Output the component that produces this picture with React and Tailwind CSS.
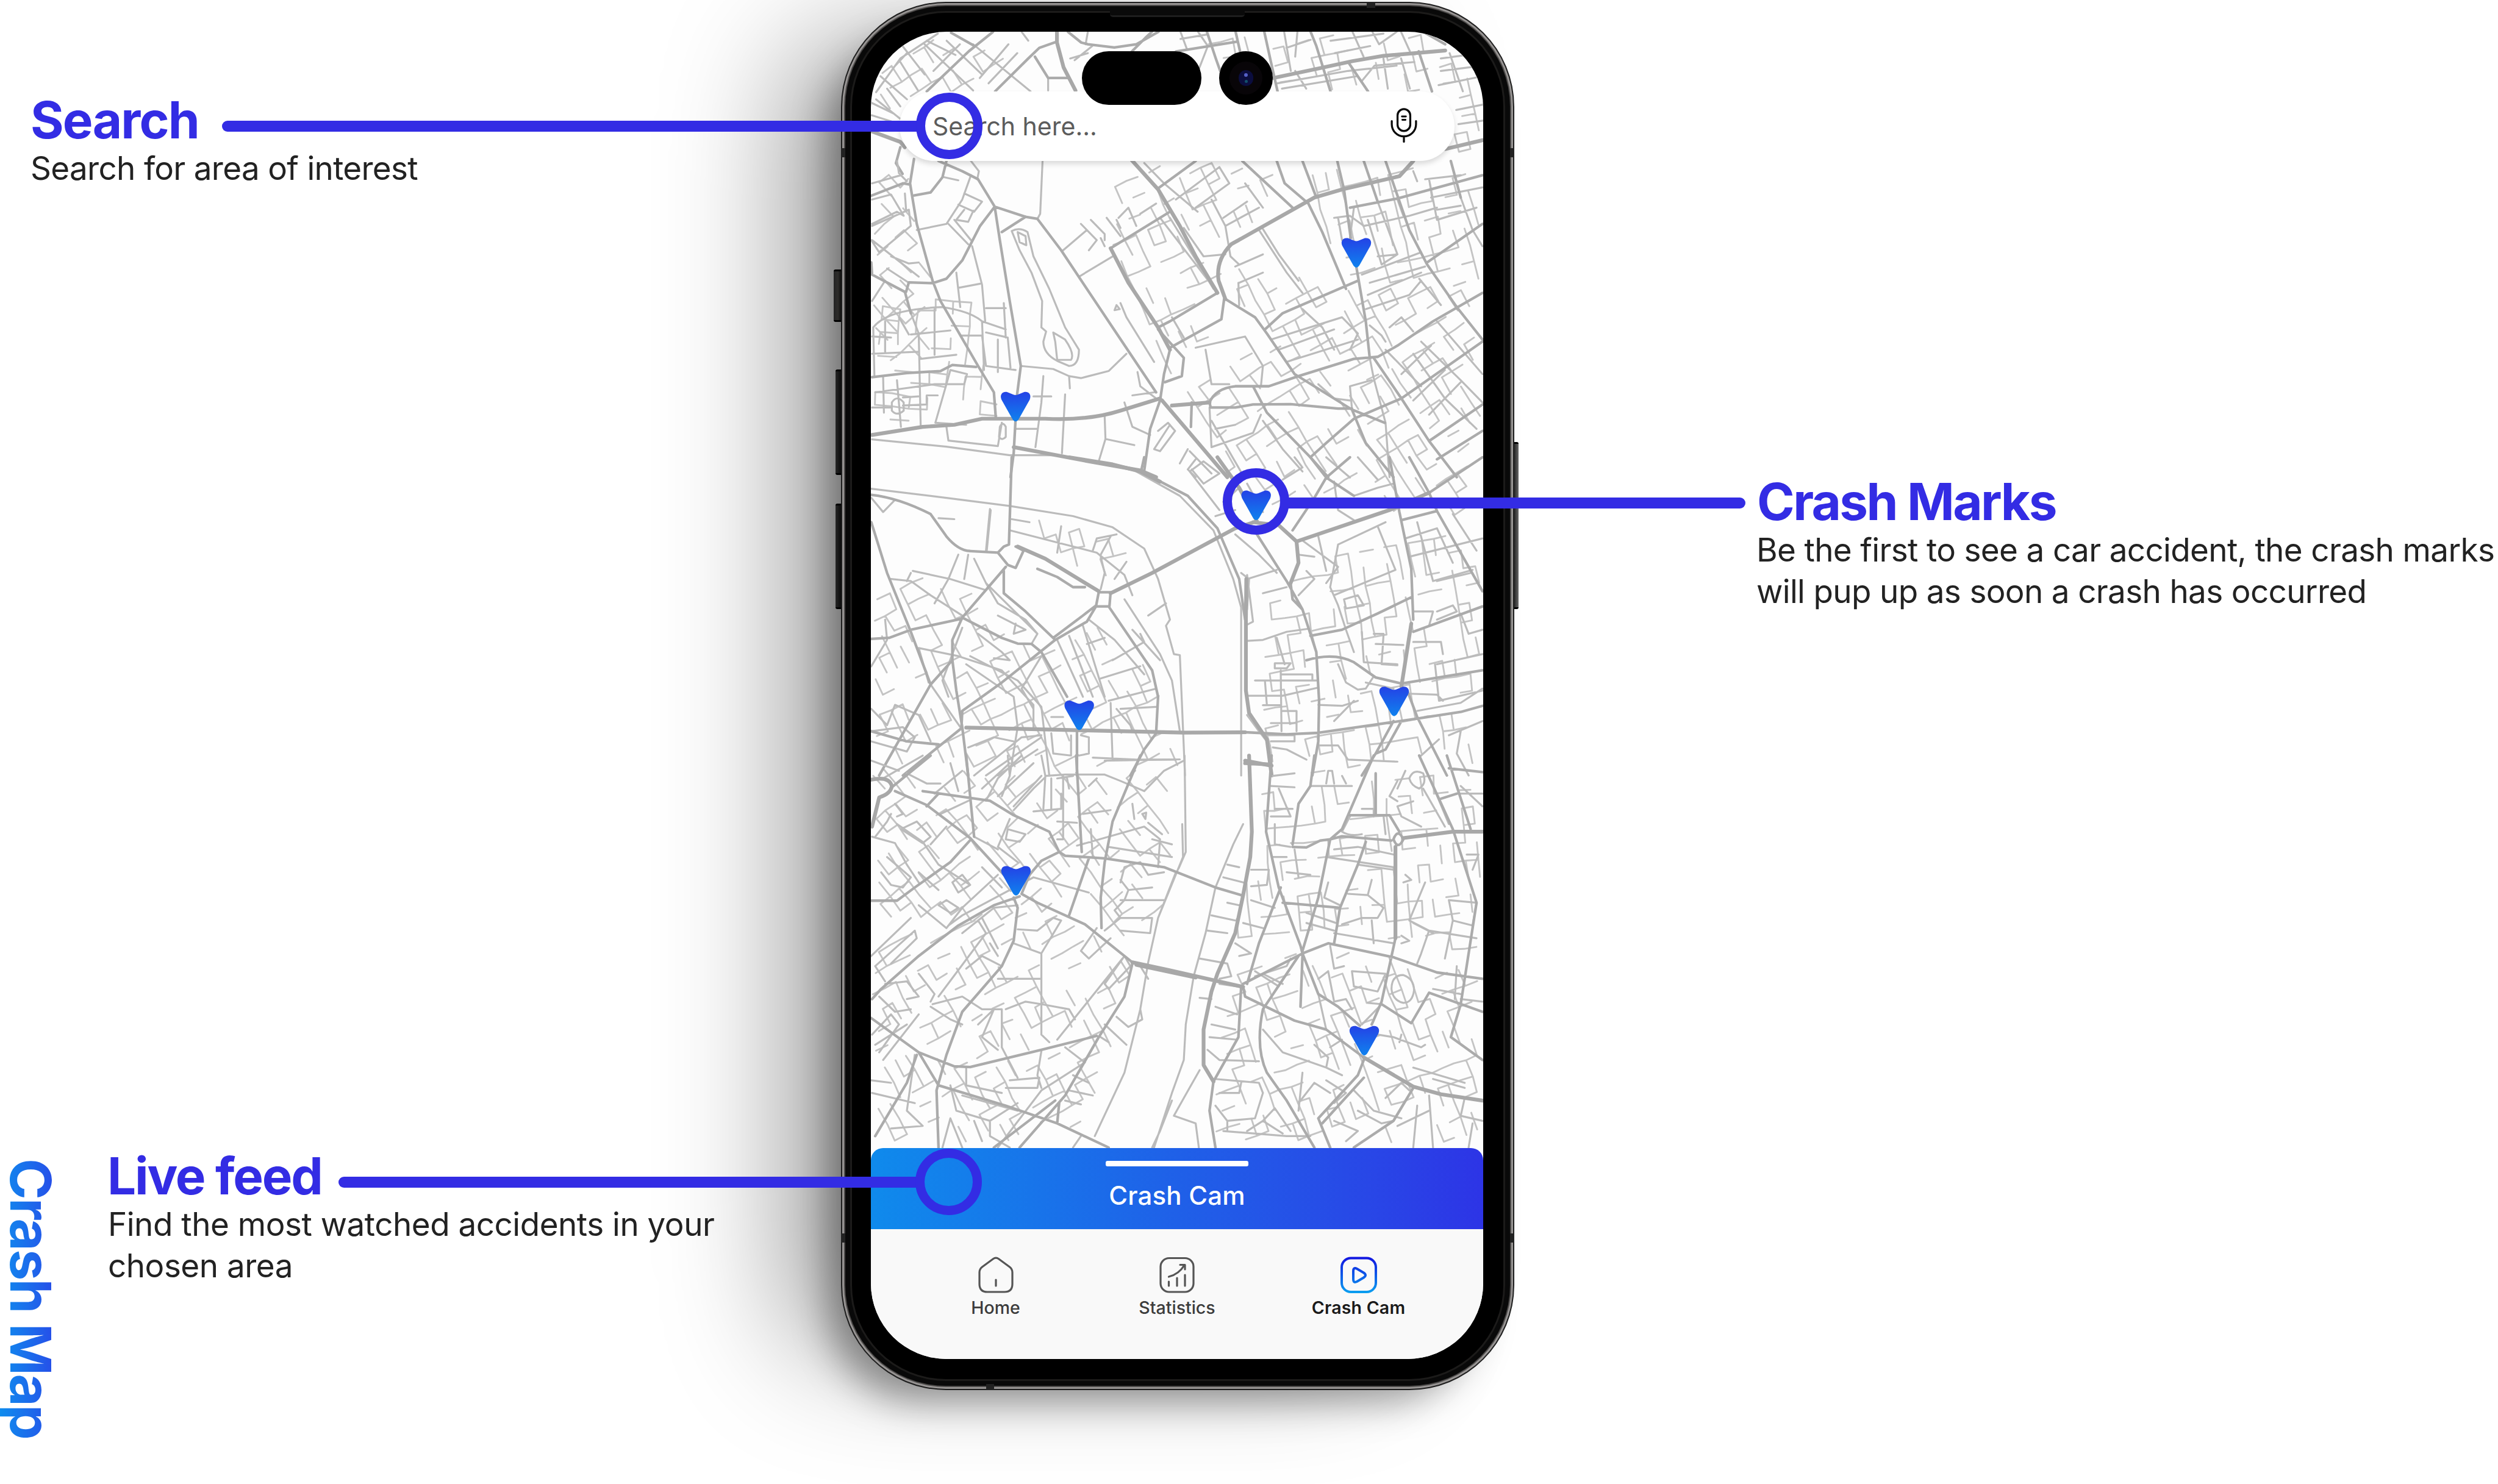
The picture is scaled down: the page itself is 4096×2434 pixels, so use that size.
import React from "react";

const FRAMES = {
  north: "matrix(1.1096 0 0 0.4464 2080 0)",
  upper: "matrix(0.995 0 0 0.5102 2180 400)",
  middle: "matrix(0.995 0 0 0.5102 2180 1150)",
  lower: "matrix(0.995 0 0 0.6378 2180 1900)",
};

/* Traced streets: w = heavy, m = main, s = side street */
const STREETS = {
  north: {
    w: ["M520 180L520 240L535 380L562 510", "M1010 440L1115 385L1190 345L1260 315L1400 285", "M1400 840L1485 790", "M100 740L165 800L175 830"],
    m: [
      "M545 180L575 240L590 250L650 268L700 250L750 180", "M990 180L1005 350L1020 515", "M1095 180L1108 260L1140 515", "M1340 290L1370 515",
      "M280 185L330 255", "M375 180L320 290L225 515", "M520 235L480 270L455 330L380 515", "M470 320L500 440L545 440", "M690 290L720 215L735 180",
      "M165 830L155 920L170 980", "M1180 350L1225 515", "M860 180L880 330L890 400", "M925 180L935 290", "M790 290L930 235", "M1350 180L1400 250",
    ],
    s: [
      "M250 190L165 330L110 520", "M170 260L220 420", "M165 350L205 510", "M220 250L330 510", "M270 230L350 420", "M330 250L460 515", "M440 180L455 230",
      "M225 230L290 310", "M180 300L150 380", "M120 430L180 560", "M110 560L165 670", "M135 500L165 600", "M300 250L240 400", "M410 250L345 440", "M430 300L365 470",
      "M800 180L815 280", "M840 180L862 260L840 400", "M800 220L860 195", "M1040 270L1095 225", "M1035 180L1050 400", "M1065 180L1060 320", "M1190 180L1215 320", "M1235 180L1250 250L1290 180",
      "M1300 180L1320 290", "M1140 230L1260 190", "M1150 300L1230 260", "M1020 470L1180 400L1290 370", "M1030 500L1200 430", "M1060 400L1085 500", "M1210 460L1240 370L1330 350",
      "M1390 330L1480 300", "M1390 400L1485 370", "M1385 480L1485 430", "M1410 300L1440 515", "M1425 620L1485 590", "M1430 700L1485 680", "M600 260L560 340", "M550 330L590 300",
      "M1260 330L1270 500", "M1300 330L1320 500", "M590 180L585 250", "M500 440L500 510", "M100 650L165 700", "M100 580L150 640",
    ],
  },
  upper: {
    w: [
      "M1380 10L1345 85L1200 150L1130 190L1080 245L920 420Q880 500 888 600L905 690", "M740 1180L640 1240Q560 1290 450 1280L290 1280L220 1310L140 1320L12 1360",
      "M668 5L735 150L790 330L830 480L885 660", "M370 1420L560 1490L690 1535L730 1568", "M745 1190L910 1568", "M615 440L660 610L735 830L765 940", "M770 1215L865 1200",
    ],
    m: [
      "M5 185L90 120L105 125", "M118 0L108 120L125 320L165 600L185 700L280 1020L320 1150L325 1280", "M200 10L190 90L160 165L118 180",
      "M180 10L240 60L280 100L322 235L335 400L360 700L388 1020L378 1170L370 1450L362 1568", "M322 235L285 330L240 500L200 590L165 612L105 608L98 655",
      "M322 235L400 285L430 295L490 450L620 830L730 1150", "M400 285L340 360", "M830 10L735 145", "M765 260L615 440", "M765 940L750 1060L740 1190",
      "M905 690L980 780L1010 860L1080 1060L1225 1235L1308 1300", "M740 1190L715 1330L700 1535", "M865 1200Q880 1130 930 1120L1015 1120L1090 1070L1230 985L1290 975L1340 920L1430 800L1555 660",
      "M865 1200L868 1225L930 1225L975 1210L1070 1208L1190 1230L1225 1230", "M948 10L1075 240", "M1035 10L1055 120L1115 220L1150 360L1210 640", "M1100 10L1135 190",
      "M1188 10L1205 150L1222 390", "M1236 530L1260 800L1270 980", "M1255 10L1290 210", "M1310 10L1370 350L1415 520L1490 730L1555 890", "M1475 10L1500 190",
      "M1220 240L1340 195L1555 80", "M1555 320L1415 510", "M1240 600L1050 760L1005 840", "M885 660L765 800L735 830", "M765 930L895 790L902 690",
      "M975 1120L1010 1250L1120 1470L1165 1568", "M1555 900L1350 1180L1230 1280L1160 1400L1120 1470", "M1280 980L1350 1180L1420 1390L1490 1568", "M12 1075L100 1055L185 1045L215 1015L275 1025",
      "M10 510L12 570L95 655L110 760", "M735 840L800 980L795 1070L752 1100", "M820 1200L818 1320", "M1225 1235L1260 1400L1330 1568", "M1420 1390L1555 1210", "M1440 1480L1555 1340",
    ],
    s: [
      "M443 10L437 270L430 295", "M365 355Q385 335 405 360L420 480L460 640L500 830L535 940Q535 1020 510 1020L480 995Q445 960 445 900L452 850L440 830L442 700L415 560L385 450Z",
      "M470 855L500 890Q525 960 515 990L480 990L475 900Z", "M380 360L400 380L402 425L385 410Z", "M388 1020L470 1035L510 1070L540 1080L610 1045L655 960",
      "M15 830Q50 740 190 730Q260 750 290 800L350 840", "M12 1382L200 1418L360 1460L480 1460", "M110 760L130 860L135 1320", "M15 830L18 1075", "M200 1320L205 1388L330 1415L340 1300",
      "M170 740L170 965", "M12 960L130 950", "M110 865L210 845", "M12 875L60 880", "M45 800L45 950", "M80 780L105 865", "M135 985L225 965", "M235 870L290 870L300 1020L375 1040",
      "M290 800L295 1040", "M330 890L330 1050", "M300 855L355 880L362 1030", "M225 560L235 730", "M265 430L290 620L298 800", "M230 635L285 615", "M300 735L350 735", "M345 710L350 880",
      "M12 330L105 250L110 330L30 460L10 400", "M12 200L60 175L92 280L75 260L12 320", "M95 170L98 250", "M12 120L85 80", "M75 10L80 70L100 110", "M125 350L200 320L240 200L262 80",
      "M262 10L282 60L278 100", "M245 170L290 210L270 260L230 225", "M205 320L255 420", "M220 300L262 400", "M60 480L105 515L130 510", "M12 400L130 580", "M50 540L105 610", "M45 600L12 700",
      "M245 250L225 300L255 310L268 255", "M195 90L230 105", "M20 1150L170 1110L245 1110L252 1060L210 1040L200 1110L172 1300L250 1310", "M40 1075L42 1250", "M75 1090L85 1320",
      "M12 1225L60 1225", "M90 1175L130 1170", "M90 1215L150 1210L150 1165L178 1165", "M62 1200Q75 1160 92 1200L92 1240Q75 1270 62 1240Z", "M445 1070L440 1200L425 1420", "M500 1160L492 1450",
      "M420 1170L465 1170", "M510 1070L512 1130", "M375 1330L430 1330", "M335 1320Q342 1290 350 1320L350 1370Q340 1390 333 1370Z", "M600 1270L602 1380L585 1490", "M602 1380L675 1410", "M650 1200L670 1320L715 1360",
      "M670 1165L725 1150", "M683 1050L690 1120L730 1180", "M765 1310L725 1430L740 1440L778 1340L760 1300L735 1340", "M540 320L580 400L560 450", "M555 350L495 450", "M565 300L600 370L600 400", "M605 290L640 380",
      "M635 290L660 240L680 330", "M535 580L620 480", "M590 390L600 430", "M630 300L640 340", "M640 710L655 780L725 1000", "M630 720L625 745L638 740Z", "M690 270L730 220", "M700 20L750 120L835 260",
      "M740 290L870 620", "M765 290L875 640", "M800 340L850 480L905 470", "M770 780L800 880", "M780 200L890 40L915 120L830 240", "M870 200L905 330L918 480L940 520", "M905 330L990 240", "M900 290L960 210", "M955 120L1000 240",
      "M855 940L870 1110L915 1110", "M830 930L955 875L1000 1020L995 1120", "M930 530L1000 470", "M990 350L1060 560L1100 660", "M940 610L1000 560", "M938 610L940 720", "M1000 345L1040 470L1090 600",
      "M1220 390L1230 240", "M1180 290L1220 280L1255 330L1370 280L1440 240", "M1190 290L1200 400", "M1265 300L1300 520", "M1290 210L1340 470L1290 480", "M1340 200L1355 280", "M1420 100L1440 300L1540 240", "M1500 190L1530 350L1555 430",
      "M1425 190L1555 140", "M1440 250L1500 230", "M1410 100L1500 80", "M1380 60L1390 110", "M1395 590L1450 720", "M1270 610L1410 530", "M1265 670L1400 560", "M1300 520L1340 470", "M1250 570L1400 460",
      "M1260 740L1370 670L1400 600", "M1440 800L1555 1060", "M1400 900L1500 1090L1555 1200", "M1380 960L1460 1180L1540 1330", "M1310 940L1400 1120", "M1425 920L1350 1060", "M1460 1040L1380 1190", "M1500 1100L1420 1260",
      "M1225 1230L1220 1120L1275 1090", "M1140 1110L1180 1180L1220 1190", "M1270 980L1280 1080L1310 1300L1320 1568", "M1020 890L1200 780L1240 860L1220 940", "M1040 940L1180 840", "M1060 1000L1240 890", "M1100 740L1150 830L1180 940",
      "M1270 820L1300 870L1310 900", "M1320 830L1350 780L1380 850", "M995 1260L975 1350L870 1420L865 1225", "M1000 1290L1050 1430L1100 1540", "M870 1290L950 1560", "M880 1330L930 1310", "M815 1440L870 1550", "M830 1480L810 1530L830 1568", "M790 1500L810 1430",
    ],
  },
  middle: {
    w: [
      "M510 0L620 35L690 70L740 120", "M380 440L450 500L585 660", "M615 670L720 570L930 350L985 315", "M885 0L940 150L985 315", "M1085 415L1320 260L1420 175",
      "M250 1332L530 1345L800 1357L955 1355", "M958 600L957 800L957 1150L965 1260L1010 1390L1022 1568", "M1375 820L1350 1130", "M975 320L1040 335L1085 415L1090 520L1070 620", "M955 1495L1022 1520",
    ],
    m: [
      "M365 0L358 430L345 440L330 470L355 530L375 545L395 460L375 440", "M692 70L810 190L885 350L940 600L955 800", "M700 0L692 70", "M10 185Q80 200 160 280L200 390Q230 460 260 462L330 470",
      "M585 665L615 665L612 735L578 735Z", "M578 735L555 810L475 900L340 1110L240 1250L238 1330", "M610 735L720 1050L735 1180L730 1360L700 1440L665 1568", "M350 540L240 790L215 900L215 1000L160 1120L30 1568",
      "M10 895L55 890L110 850L240 795", "M240 790L340 890L380 918L415 920L440 960L505 1180", "M530 1345L530 1568", "M10 320L50 570L110 860L160 1120", "M235 1340L90 1568", "M345 560L345 670L400 760L475 900",
      "M215 1000L225 1150L240 1330L255 1568", "M955 1355L1060 1365L1140 1358L1400 1285L1500 1255L1555 1225", "M985 380L1060 610L1100 750L1135 960L1142 1200L1140 1400L1125 1568", "M1070 620L1075 700L1100 750",
      "M1320 0L1345 270L1375 550L1380 800", "M1365 1150L1390 1280L1465 1568", "M1120 0L1160 100L1230 190", "M1220 0L1160 100L1130 200L1075 360", "M1350 310L1440 265L1420 175L1370 0", "M1420 175L1555 0",
      "M1440 265L1555 660", "M1120 880L1200 850L1290 770L1375 690", "M1380 860L1555 735", "M1110 1000Q1180 960 1230 1010L1285 1085L1350 1115L1555 1050", "M1330 1300L1285 1460L1250 1568", "M1350 1300L1310 1440L1285 1460",
      "M10 1350L100 1400L180 1415", "M430 550L480 590L520 640L550 640", "M575 735L545 780L470 890",
    ],
    s: [
      "M10 155L200 200L360 240L520 290L620 345L700 450L735 600L765 800L755 830L775 970L790 975L795 1200L803 1568", "M680 70L790 190L875 360L925 600L945 740L945 1568", "M360 360L480 420L580 470L650 580L670 680",
      "M490 340L480 470", "M300 460L310 255", "M312 260L302 460", "M365 305L410 320", "M570 460L580 400L630 380", "M615 390L590 480", "M655 515L625 600", "M180 300L220 305", "M590 490L600 570L590 650",
      "M230 480L205 600L170 720", "M255 480L245 600", "M270 500L300 620L330 720L400 800L430 870L415 920", "M115 560L210 600L300 655", "M60 600L110 610L160 680L240 780", "M110 570L100 610", "M300 620L430 870",
      "M240 840L190 1100L205 1180", "M130 940L230 980L340 1050L420 1220L420 1330", "M280 870L340 960L360 1000L320 990", "M250 1020L370 1180L380 1330L360 1568", "M260 980L380 1100L440 1230L460 1568", "M440 980L390 1140L420 1240",
      "M330 780L400 850L370 870L375 820", "M480 900L545 1180", "M510 880L570 1180", "M545 830L600 1180", "M560 800L625 900L700 1070", "M555 920L600 890", "M590 1090L690 1030", "M610 1200L730 1140", "M620 1000L700 910L690 870", "M670 850L740 1000",
      "M710 780L755 720", "M650 700L740 970L770 1100L790 1350", "M640 1240L730 1230", "M465 1280L495 1280", "M630 1240L665 1320L670 1350", "M615 1210L620 1490", "M465 1360L470 1460L515 1470L515 1370", "M540 1370L560 1380L560 1460L535 1470", "M570 1480L680 1490L780 1490",
      "M10 1030L50 900L45 800", "M10 1240L50 1320L70 1220L130 1270L160 1400", "M10 1350L90 1330L120 1380L100 1450L10 1400", "M160 1120L235 1330", "M130 940L155 1110", "M270 1568L390 1380L440 1370", "M300 1568L440 1380", "M255 1430L320 1380L370 1400",
      "M330 1568L430 1440", "M930 380L990 480L1035 570", "M960 600L1035 555", "M960 580L975 810L960 825", "M945 570L965 600L960 750", "M1000 670L1060 640", "M960 905L1000 900L1060 860L1115 845", "M1035 890L1055 1020", "M1030 1015L1070 1015L1060 1040L1030 1040Z",
      "M980 1100L1135 1100", "M1000 1222L1045 1222", "M1045 1050L1047 1350", "M1045 1070L1125 1070L1125 1100", "M960 1175L1050 1175L1140 1135", "M1005 1100L1010 1220", "M1050 1250L1085 1250L1085 1350", "M1140 1220L1200 1225L1240 1200", "M1180 1300L1230 1200",
      "M1190 430L1170 640L1190 730L1210 850L1230 960", "M1100 410L1190 540L1160 620", "M1290 340L1335 555L1180 680", "M1310 320L1190 430", "M1140 390L1160 560", "M1370 490L1555 400", "M1360 400L1440 350L1480 520", "M1390 320L1430 610L1530 555", "M1440 610L1525 570", "M1480 280L1540 460",
      "M1205 700L1240 680L1255 730L1210 745Z", "M1380 760L1430 760L1420 830", "M1440 760L1480 730L1490 760L1440 800", "M1500 770L1520 870L1555 850", "M1380 910L1450 910L1455 970", "M1280 870L1305 870L1300 1020L1340 1025", "M1285 920L1355 925", "M1250 860L1255 1010L1340 1020",
      "M1440 1020L1555 970", "M1435 1020L1445 1200L1555 1150", "M1370 1165L1440 1170L1455 1200", "M1390 1250L1500 1210L1555 1140", "M1190 1020L1210 1110L1240 1145L1260 1140L1280 1080", "M1260 1110L1330 1140", "M1500 1350L1490 1460L1520 1568", "M1400 1470L1445 1390",
      "M1470 1370L1555 1300", "M1140 1420L1190 1420L1215 1490L1340 1500", "M1025 1430L1060 1440L1110 1490", "M960 1270L990 1350L1010 1400", "M1020 1310L1085 1310", "M1000 1370L1080 1370L1080 1400L1020 1400", "M10 200L40 270L70 210", "M820 60L850 130L890 80L850 20L815 70L890 260",
      "M900 220L940 150", "M880 290L930 260", "M1000 270L960 130", "M1050 110L1100 50L1080 0", "M1180 120L1190 260L1230 310", "M1090 480L1130 490", "M1110 560L1130 600L1090 680", "M1160 0L1220 100", "M1240 0L1290 110", "M1230 190L1290 150L1330 130",
    ],
  },
  lower: {
    w: [
      "M670 815L760 845L950 912", "M680 825L830 875", "M965 0L972 300L968 400L950 550L930 700L885 860L870 930L850 1080L850 1220L875 1285", "M1335 360L1335 720", "M1355 325L1480 300L1555 300", "M1255 1190L1380 1305L1450 1335L1555 1360",
      "M10 95Q55 80 62 120Q60 150 30 165L12 280", "M955 30L1020 35",
    ],
    m: [
      "M62 125L160 0", "M70 140L150 195L260 325L345 470", "M140 140L310 178L370 235L460 300L485 380L500 395L600 405L750 440L880 520L945 550", "M485 380L440 415L410 470L390 545L430 580L550 665L670 815",
      "M10 572L75 572L120 520L210 420L262 330", "M250 0L270 320", "M385 555L320 590L230 670L130 790L35 920L12 960", "M370 560L380 600L370 730L340 830L240 1010L200 1180L175 1320L180 1545",
      "M10 1035L130 1170L180 1300L350 1380L480 1450L610 1545", "M130 1170L220 1225L260 1228L440 1160L580 1105", "M125 1180L100 1290L20 1500", "M670 820L650 950L585 1110L500 1340L385 1545", "M690 0L620 260L600 420L590 560L592 680",
      "M528 0L542 380", "M1022 0L1008 300L1040 520L1095 750L1100 780L1140 940L1190 990L1245 1065", "M950 912L955 950L1080 1045L1160 1080L1255 1190", "M945 912L938 1110L875 1285L865 1400L880 1545",
      "M950 900L1100 780L1165 740L1330 795L1440 855L1555 880", "M1280 0L1200 290L1170 330L1140 560L1100 770", "M1045 520L990 740L960 900", "M1090 790L1000 1000Q980 1150 1010 1250L1060 1360L1130 1545", "M1130 0L1120 120L1090 190L1075 350",
      "M1075 360L1110 362L1145 335L1170 330L1200 318L1325 335", "M1335 720L1300 970L1275 1060", "M1395 0L1480 290L1540 580L1500 980L1475 1110L1555 1200", "M1465 0L1525 290", "M1470 50L1555 65", "M1255 1200L1240 1260L1140 1430L1170 1545",
      "M1255 1270L1150 1450", "M1380 1310L1330 1440L1230 1545", "M1300 980L1375 1055L1420 935L1555 1010", "M1050 580L1195 600", "M1220 235L1320 235L1345 300", "M1260 340L1240 430L1195 600L1180 740", "M560 405L510 630", "M180 150L150 200",
      "M1330 330Q1341 285 1355 330Q1341 375 1330 330", "M475 1360L320 1545", "M485 1370L480 1450", "M1100 790L1095 990", "M1285 70L1285 235", "M1450 170L1490 150",
    ],
    s: [
      "M802 0L805 380L787 445M780 460L735 640L710 815L690 1000L650 1250L575 1500", "M796 270L798 400L735 640", "M950 270L925 350L880 520L855 700L825 870L805 1060L800 1200L770 1330L725 1545", "M840 1240L800 1350L775 1420L830 1450L838 1545", "M770 1360L740 1480L720 1545",
      "M1325 920Q1325 865 1355 865Q1382 880 1382 925Q1378 975 1355 975Q1328 965 1325 920", "M1370 90Q1380 50 1405 70Q1415 110 1395 130Q1375 120 1370 90", "M205 670L240 630L420 480L560 540", "M10 790L110 640", "M20 830L120 690L125 720L60 820", "M20 830L45 890",
      "M130 590L200 680L240 600L330 470", "M180 590L200 570L230 600L210 620Z", "M215 500L240 470L260 510L230 540Z", "M180 430L260 510", "M290 440L340 520", "M130 460L180 530", "M75 270L140 340L180 430", "M85 290L125 260L160 320L140 345Z",
      "M60 230L50 260L20 320", "M12 320L70 345L100 430L130 500", "M35 460L60 510L90 520L110 480L80 440L50 400", "M200 280L160 350", "M70 190L90 230L75 240", "M270 320L330 370", "M355 290L400 310L385 340L350 330Z", "M360 250L330 360L380 420", "M370 215L420 130L450 85",
      "M450 80L500 75L600 75L640 100L700 140L750 60L800 20", "M420 220L490 210L490 150", "M545 230L615 215", "M480 90L520 80", "M505 90L510 130", "M560 120L580 90", "M480 260L530 265", "M530 355L700 280L740 330L735 440", "M710 265L745 310", "M695 230L705 225L703 250Z", "M640 500L650 440L690 420L710 470L750 460",
      "M640 570L750 570", "M640 640L720 640L715 700L640 690", "M640 490L660 530L650 570L625 610L640 640L600 690", "M660 530L720 520", "M720 330L770 350", "M610 360L770 400", "M600 900L650 790L665 830L610 920Z", "M645 800L480 1120", "M615 720L560 800L540 770L580 680",
      "M380 685L430 690L470 640L490 650L440 780L370 740", "M440 780L440 1100L460 1130", "M330 880L440 880", "M350 1000L400 970L440 980L510 1000L525 1040", "M340 1000L340 1150L380 1270", "M165 980L240 950L290 1000L340 1000", "M160 990L210 1040L240 1060", "M130 860L170 940L160 970",
      "M280 1060L320 1000L290 1110L330 1160", "M250 840L290 790L340 830", "M180 950L300 700L280 650", "M310 740L330 790", "M290 640L330 760", "M240 700L320 600L380 590", "M45 900L100 890L130 950L100 960", "M30 950L70 1010L110 1000", "M12 1100L60 1020L80 1060L30 1170", "M20 1140L100 1060",
      "M40 1200L130 1020", "M10 1280L60 1290", "M12 1330L120 1370", "M110 1290L100 1400L140 1460L60 1470", "M120 1180L110 1290", "M210 1300L225 1400L310 1440L380 1370", "M240 1340L380 1400", "M250 1230L250 1300L340 1330", "M350 1310L430 1310L435 1270L360 1280", "M360 1210L380 1270", "M440 1165L430 1260L440 1310",
      "M500 1150L550 1210L440 1320L330 1545", "M510 1320L570 1340", "M500 1360L540 1375", "M520 1260L560 1290", "M600 1060L655 1140", "M610 1130L590 1110", "M690 830L710 880M690 1000L695 1040L660 1070L630 1030", "M190 1545L210 1430L240 1545", "M270 1440L290 1520", "M310 1440L310 1500L360 1545", "M540 1500L520 1545",
      "M890 1330L940 1330L945 1290", "M880 1275L990 1290L1000 1330", "M890 1200L990 1205", "M870 1060L930 1080", "M865 1110L935 1120", "M860 1160L890 1200", "M880 990L935 1020", "M870 960L840 955", "M890 900L935 910", "M840 800L910 820L920 870L890 880", "M860 690L910 700", "M870 630L930 650", "M910 580L940 590", "M900 480L950 500", "M910 430L940 440",
      "M970 450L1015 450L1010 510L970 515", "M970 570L1030 600", "M950 660L1000 680", "M930 740L970 780L940 790", "M980 870L1060 830L1070 800", "M1000 860L1050 900", "M980 850L1040 910", "M1025 80L1080 70", "M1020 120L1080 125", "M1020 240L1070 240L1040 130", "M1030 270L1030 350L1070 360", "M1075 210L1030 210",
      "M1120 120L1225 120", "M1160 110L1165 60L1175 60L1180 110", "M1210 110L1200 80", "M1060 400L1025 400", "M1060 460L1120 470", "M1080 370L1090 480", "M1165 500L1155 560L1195 590", "M1240 430L1330 450", "M1160 400L1330 440", "M1180 370L1240 360L1330 390", "M1215 545L1265 550L1275 490", "M1265 550L1305 600L1290 640L1250 640L1200 665",
      "M1110 620L1185 660", "M1110 660L1180 690", "M1180 700L1330 740", "M1275 650L1280 740", "M1350 710L1370 730L1350 740", "M1225 850L1310 860L1290 930L1230 910Z", "M1170 750L1180 840L1205 830", "M1165 850L1180 970L1210 960L1225 1000", "M1140 880L1165 850", "M1265 975L1300 980L1250 1060", "M1410 500L1370 650L1420 690L1540 720", "M1360 470L1375 490L1355 500",
      "M1470 570L1540 580L1530 670L1480 650L1470 570", "M1420 690L1400 780L1390 820", "M1380 660L1430 700", "M1480 650L1460 800", "M1430 920L1500 940", "M1490 830L1485 960", "M1500 960L1555 970", "M1290 1100L1330 1110L1400 1150L1410 1140", "M1350 1100L1345 1130", "M1380 1230L1510 1290M1430 1275L1510 1310", "M1140 940L1160 1080", "M1000 1080L1050 1170L1160 1230L1200 1260",
      "M1130 1140L1165 1190L1160 1230", "M1200 1120L1170 1150", "M1100 1250L1090 1400", "M1090 1370L1130 1290L1170 1330", "M1160 1280L1210 1330L1180 1370", "M1240 1400L1300 1450L1330 1440", "M1230 1320L1280 1400L1350 1430", "M1310 1350L1350 1290L1370 1320", "M1180 1440L1240 1480L1210 1520", "M1420 1340L1430 1545", "M1340 1460L1420 1400", "M1390 1380L1380 1545", "M1510 1350L1500 1420L1555 1440",
      "M1530 1450L1520 1545", "M1000 1330L980 1430L910 1440", "M900 1480L1060 1500L1120 1500", "M1000 1440L1030 1390L1070 1480", "M960 1480L1000 1440L1050 1490", "M880 1380L910 1440L910 1480", "M1340 100L1320 160L1340 180", "M1380 180L1340 200L1350 240L1400 280", "M1405 130L1460 280", "M1360 60L1340 130", "M1430 120L1470 270",
      "M1500 120L1555 200", "M1490 150L1555 150", "M1515 390L1545 390L1530 450", "M1250 210L1280 210L1280 240", "M1220 240L1200 300Q1220 320 1250 310", "M1305 240L1310 310", "M100 70L150 110L185 110", "M140 0L40 90", "M210 30L230 140", "M240 60L170 150", "M300 178L330 90L390 0", "M330 160L420 30", "M290 130L360 30", "M370 200L440 80", "M355 0L360 80L340 160",
      "M440 0L450 80L445 210", "M465 90L465 210M495 80L495 330L480 330", "M565 290L570 400", "M600 20L790 15", "M670 190L675 250", "M10 20L80 60", "M185 230L260 175",
    ],
  },
};

/* Residential infill; polygons on a quarter-scale grid */
const QUARTERS = [
  { p: [[552, 40], [572, 24], [634, 22], [632, 56], [590, 60], [566, 74], [548, 90]], a: 58, n: 3 },
  { p: [[742, 22], [905, 22], [928, 50], [930, 100], [912, 98], [912, 66], [880, 58], [800, 56]], a: 78, n: 5 },
  { p: [[548, 102], [572, 108], [582, 160], [592, 200], [586, 225], [548, 232]], a: 48, n: 7 },
  { p: [[548, 190], [612, 186], [630, 262], [548, 268]], a: 5, n: 8 },
  { p: [[700, 105], [760, 102], [812, 106], [770, 165], [764, 205], [735, 242], [712, 190], [696, 150]], a: 66, n: 11 },
  { p: [[775, 160], [845, 180], [930, 180], [930, 190], [860, 240], [800, 225], [775, 195]], a: 62, n: 13 },
  { p: [[815, 104], [930, 104], [930, 180], [845, 180]], a: 76, n: 15 },
  { p: [[740, 240], [790, 220], [860, 240], [930, 190], [930, 330], [850, 318], [800, 318], [770, 300]], a: 58, n: 17 },
  { p: [[548, 370], [570, 360], [608, 368], [625, 395], [660, 405], [690, 385], [730, 430], [742, 482], [548, 482]], a: 64, n: 19 },
  { p: [[640, 320], [690, 330], [715, 345], [700, 368], [660, 350]], a: 75, n: 21 },
  { p: [[548, 482], [742, 482], [738, 520], [735, 570], [712, 596], [680, 570], [548, 590]], a: 52, n: 23 },
  { p: [[548, 590], [660, 568], [712, 606], [706, 630], [690, 690], [670, 718], [548, 718]], a: 62, n: 25 },
  { p: [[790, 380], [840, 340], [930, 320], [930, 480], [790, 488]], a: 80, n: 27 },
  { p: [[790, 488], [930, 480], [930, 600], [860, 590], [768, 592], [785, 540]], a: 84, n: 29 },
  { p: [[768, 600], [850, 598], [930, 610], [930, 718], [758, 718], [760, 660]], a: 70, n: 31 },
];

function inside(x, y, poly) {
  let hit = false;
  for (let i = 0, j = poly.length - 1; i < poly.length; j = i++) {
    const [xi, yi] = poly[i];
    const [xj, yj] = poly[j];
    if (yi > y !== yj > y && x < ((xj - xi) * (y - yi)) / (yj - yi) + xi) hit = !hit;
  }
  return hit;
}

function infill({ p, a, n }) {
  const poly = p.map(([x, y]) => [x * 4.004, y * 4.004]);
  const rand = (i, j, k) => {
    const v = Math.sin(i * 127.1 + j * 311.7 + k * 74.7 + n * 19.3) * 43758.5453;
    return v - Math.floor(v);
  };
  const rad = (a * Math.PI) / 180;
  const cx = poly.reduce((s, q) => s + q[0], 0) / poly.length;
  const cy = poly.reduce((s, q) => s + q[1], 0) / poly.length;
  const at = (i, j) => {
    const u = (i + (rand(i, j, 1) - 0.5) * 0.1) * 44;
    const v = (j + (rand(i, j, 2) - 0.5) * 0.16) * 31;
    return [cx + u * Math.cos(rad) + v * Math.sin(rad), cy + u * Math.sin(rad) - v * Math.cos(rad)];
  };
  let d = "";
  for (let i = -16; i <= 16; i++) {
    for (let j = -22; j <= 22; j++) {
      const s = at(i, j);
      if (!inside(s[0], s[1], poly)) continue;
      [[i + 1, j, 3, 0.42], [i, j + 1, 4, 0.4]].forEach(([k, l, seed, chance]) => {
        const e = at(k, l);
        if (rand(i, j, seed) < chance && inside(e[0], e[1], poly)) {
          d += `M${s[0].toFixed(0)} ${s[1].toFixed(0)}L${e[0].toFixed(0)} ${e[1].toFixed(0)}`;
        }
      });
    }
  }
  return d;
}

const PINS = [[3410, 598], [2553, 985], [3158, 1233], [2713, 1761], [3505, 1726], [2554, 2177], [3430, 2579]];

function CityMap() {
  return (
    <svg className="block h-full w-full" viewBox="2189 80 1540 2816" preserveAspectRatio="none" fill="none" strokeLinejoin="round" strokeLinecap="round">
      <defs>
        <linearGradient id="pin" x1="0" y1="0" x2="0" y2="1">
          <stop offset="0" stopColor="#2442e6" />
          <stop offset="1" stopColor="#0f82ee" />
        </linearGradient>
      </defs>
      <g stroke="#c4c4c4" strokeWidth="4.4">
        {QUARTERS.map((q) => <path key={q.n} d={infill(q)} />)}
      </g>
      {Object.keys(STREETS).map((k) => (
        <g key={k} transform={FRAMES[k]}>
          <path d={STREETS[k].s.join("")} stroke="#bbbbbb" strokeWidth="3.2" vectorEffect="non-scaling-stroke" />
          <path d={STREETS[k].m.join("")} stroke="#ababab" strokeWidth="4.3" vectorEffect="non-scaling-stroke" />
          <path d={STREETS[k].w.join("")} stroke="#a8a8a8" strokeWidth="6.2" vectorEffect="non-scaling-stroke" />
        </g>
      ))}
      {PINS.map(([x, y]) => (
        <path key={x} transform={`translate(${x - 37.5} ${y})`} fill="url(#pin)"
          d="M2 20C-3 8 4-1 16 1L32 7.500Q37.500 9.500 43 7.500L59 1C71-1 78 8 73 20L46 68C41 77 34 77 29 68Z" />
      ))}
    </svg>
  );
}

function Mic() {
  return (
    <svg className="h-[60px] w-[46px]" viewBox="0 0 70 92" fill="none" stroke="#0a0a0a" strokeWidth="5" strokeLinecap="round">
      <rect x="19" y="3" width="32" height="55" rx="16" />
      <path d="M4.500 33V41A30.500 30.500 0 0 0 65.500 41V33M35 72V85" />
      <path d="M30 21.500H40M31 30H39" strokeWidth="4.500" />
    </svg>
  );
}

function HomeIcon() {
  return (
    <svg className="h-[60px] w-[58px]" viewBox="0 0 58 60" fill="none" stroke="#555" strokeWidth="3.200" strokeLinecap="round" strokeLinejoin="round">
      <path d="M24.500 3.800Q29 0.500 33.500 3.800L51.500 17Q56 20.500 56 26V45Q56 58 43 58H15Q2 58 2 45V26Q2 20.500 6.500 17ZM29 38V48" />
    </svg>
  );
}

function StatsIcon() {
  return (
    <svg className="h-[60px] w-[58px]" viewBox="0 0 58 60" fill="none" stroke="#555" strokeWidth="3.200" strokeLinecap="round" strokeLinejoin="round">
      <rect x="2" y="2.500" width="54" height="55.500" rx="14" />
      <path d="M15.500 41V48M29 35V48M42 30V48M15.500 33Q32 29 41 14M34 13.500H42V21" />
    </svg>
  );
}

function CamIcon() {
  return (
    <svg className="h-[60px] w-[60px]" viewBox="0 0 60 60" fill="none" strokeWidth="4" strokeLinejoin="round">
      <defs>
        <linearGradient id="cam" gradientUnits="userSpaceOnUse" x1="0" y1="0" x2="0" y2="60">
          <stop offset="0" stopColor="#1212e0" />
          <stop offset="1" stopColor="#0aa0f0" />
        </linearGradient>
      </defs>
      <rect x="2" y="2.500" width="56" height="55.500" rx="15" stroke="url(#cam)" />
      <path d="M21 24Q21 17 27 20L38 26.500Q44 30.500 38 34.500L27 41Q21 44 21 37Z" stroke="url(#cam)" />
    </svg>
  );
}

function Tab({ icon, label, active }) {
  return (
    <div className="flex w-[297.500px] flex-col items-center">
      {icon}
      <span className={active ? "mt-[7px] text-[28.500px] leading-[34px] font-semibold tracking-[0.200px] text-[#1a1a1a]" : "mt-[7px] text-[28.500px] leading-[34px] font-medium text-[#3c3c3c]"}>{label}</span>
    </div>
  );
}

function Phone() {
  return (
    <div className="relative mt-[3px] h-[2277px] w-[1104px] shrink-0">
      <div className="absolute top-[439px] -left-[12px] h-[86px] w-[14px] rounded-l-[3px] border-y-[3px] border-black bg-linear-to-r from-[#444] via-[#5a5854] to-[#111]" />
      <div className="absolute top-[603px] -left-[9px] h-[173px] w-[11px] rounded-l-[3px] border-y-[3px] border-black bg-linear-to-r from-[#4a4a4a] to-[#111]" />
      <div className="absolute top-[823px] -left-[9px] h-[173px] w-[11px] rounded-l-[3px] border-y-[3px] border-black bg-linear-to-r from-[#4a4a4a] to-[#111]" />
      <div className="absolute top-[722px] -right-[7px] h-[274px] w-[10px] rounded-r-[3px] border-y-[3px] border-black bg-linear-to-l from-[#6b6b6b] to-[#111]" />
      <div className="relative h-full w-full rounded-[172px] bg-[#1d1d1d] p-[2px] shadow-[-150px_0px_200px_-60px_rgba(0,0,0,0.38),-40px_40px_60px_-20px_rgba(0,0,0,0.36)]">
        <div className="h-full w-full rounded-[170px] bg-[#979493] p-[3px]">
          <div className="h-full w-full rounded-[167px] bg-[#4c4a49] p-[2px]">
            <div className="h-full w-full rounded-[165px] bg-[#090909] p-[8px]">
              <div className="h-full w-full rounded-[157px] bg-[#1c1b1a] p-[3px]">
                <div className="h-full w-full rounded-[154px] bg-black pt-[31px] pr-[33px] pb-[33px] pl-[31px]">
                  <div className="relative flex h-full w-full flex-col overflow-hidden rounded-[124px] bg-[#fdfdfd]">
                    <div className="h-[1837px] shrink-0">
                      <CityMap />
                    </div>
                    <div className="absolute top-[98px] left-[47px] flex h-[114px] w-[910px] items-center justify-between rounded-full bg-white pr-[60px] pl-[54px] shadow-[0_5px_8px_rgba(0,0,0,0.14)]">
                      <span className="text-[41px] leading-[50px] text-[#5c5c5c]">Search here...</span>
                      <Mic />
                    </div>
                    <div className="absolute top-[32px] left-[346px] flex gap-[29px]">
                      <div className="h-[88px] w-[196px] rounded-full bg-black" />
                      <div className="flex h-[88px] w-[88px] items-center justify-center rounded-full bg-black">
                        <div className="flex h-[54px] w-[54px] items-center justify-center rounded-full bg-[#080508]">
                          <div className="flex h-[26px] w-[24px] flex-col items-center justify-center gap-[5px] rounded-full bg-[#0b0d3e]">
                            <div className="h-[6px] w-[6px] rounded-full bg-[#5560c8]" />
                            <div className="h-[5px] w-[5px] rounded-full bg-[#12506a]" />
                          </div>
                        </div>
                      </div>
                    </div>
                    <div className="relative -mt-[6px] flex h-[133px] shrink-0 flex-col items-center rounded-t-[20px] bg-linear-to-r from-[#0f8aec] via-[#1f60e8] to-[#2d34e6]">
                      <div className="mt-[21px] h-[9px] w-[234px] rounded-[3px] bg-white" />
                      <span className="mt-[23px] text-[42px] leading-[50px] font-medium tracking-[0.200px] text-white">Crash Cam</span>
                    </div>
                    <div className="flex grow justify-center bg-[#f9f9f9] pt-[45px]">
                      <Tab icon={<HomeIcon />} label="Home" />
                      <Tab icon={<StatsIcon />} label="Statistics" />
                      <Tab icon={<CamIcon />} label="Crash Cam" active />
                    </div>
                  </div>
                </div>
              </div>
            </div>
          </div>
        </div>
        <div className="absolute top-0 left-[862px] h-[10px] w-[14px] bg-[#222]" />
        <div className="absolute bottom-0 left-[238px] h-[10px] w-[13px] bg-[#222]" />
        <div className="absolute top-[240px] left-0 h-[15px] w-[7px] bg-[#222]" />
        <div className="absolute top-[2020px] left-0 h-[15px] w-[7px] bg-[#222]" />
        <div className="absolute top-[240px] right-0 h-[15px] w-[7px] bg-[#222]" />
        <div className="absolute top-[2020px] right-0 h-[15px] w-[7px] bg-[#222]" />
        <div className="absolute top-[14px] left-[441px] h-[11px] w-[221px] rounded-b-[5px] border-b-[3px] border-[#1e1e1e] bg-[#0a0a0a]" />
      </div>
    </div>
  );
}

function Ring() {
  return <div className="h-[109px] w-[109px] shrink-0 rounded-full border-[15px] border-[#332ce4]" />;
}

function Heading({ children }) {
  return <h2 className="text-[83.500px] leading-[84px] font-bold whitespace-nowrap text-[#332ce4]">{children}</h2>;
}

function Note({ lines }) {
  return (
    <p className="mt-[3px] text-[53px] leading-[68px] text-[#222]">
      {lines.map((l) => <span key={l} className="block whitespace-nowrap">{l}</span>)}
    </p>
  );
}

export default function App() {
  return (
    <div className="flex h-[2434px] w-[4096px] overflow-hidden bg-white font-['Inter',sans-serif]">
      <div className="relative z-10 w-[1379px] shrink-0">
        <section className="mt-[155px] ml-[50px]">
          <div className="flex h-[84px] items-start">
            <div className="w-[314px] shrink-0 tracking-[-1.800px]"><Heading>Search</Heading></div>
            <div className="-mt-[3px] flex shrink-0 items-center">
              <div className="-mr-[3px] h-[18px] w-[1141px] shrink-0 rounded-l-full bg-[#332ce4]" />
              <Ring />
            </div>
          </div>
          <div className="tracking-[-0.700px]">
            <Note lines={["Search for area of interest"]} />
          </div>
        </section>
        <div className="mt-[1577px] flex">
          <div className="mt-[13px] -ml-[5px] w-[110px] shrink-0 bg-linear-to-r from-[#0d8fee] to-[#2a3de7] bg-clip-text text-[91.600px] leading-[110px] font-bold tracking-[-2.700px] whitespace-nowrap text-transparent [writing-mode:vertical-rl]">Crash Map</div>
          <section className="ml-[70px] shrink-0">
            <div className="flex h-[84px] items-start">
              <div className="w-[380px] shrink-0 pl-[1px] tracking-[-2.200px]"><Heading>Live feed</Heading></div>
              <div className="-mt-[3px] flex shrink-0 items-center">
                <div className="-mr-[3px] h-[18px] w-[949px] shrink-0 rounded-l-full bg-[#332ce4]" />
                <Ring />
              </div>
            </div>
            <div className="pl-[2px] tracking-[-0.500px]">
              <Note lines={["Find the most watched accidents in your", "chosen area"]} />
            </div>
          </section>
        </div>
      </div>
      <Phone />
      <div className="relative z-10 w-[1613px] shrink-0">
        <section className="mt-[781px] -ml-[478px]">
          <div className="flex h-[84px] items-start">
            <div className="-mt-[13px] flex shrink-0 items-center">
              <Ring />
              <div className="mt-[5px] -ml-[3px] h-[18px] w-[751px] shrink-0 rounded-r-full bg-[#332ce4]" />
            </div>
            <div className="ml-[19px] tracking-[-2.600px]"><Heading>Crash Marks</Heading></div>
          </div>
          <div className="ml-[875px] tracking-[-0.660px]">
            <Note lines={["Be the first to see a car accident, the crash marks", "will pup up as soon a crash has occurred"]} />
          </div>
        </section>
      </div>
    </div>
  );
}
